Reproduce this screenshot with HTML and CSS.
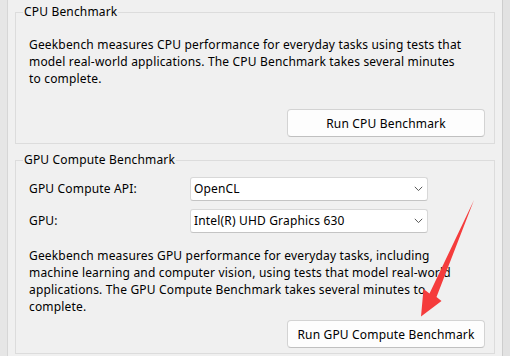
FILE: index.html
```html
<!DOCTYPE html>
<html lang="en">
<head>
<meta charset="utf-8">
<title>Geekbench</title>
<link rel="stylesheet" href="styles.css">
</head>
<body>
<div class="window">
  <div class="edge-left"></div>
  <main class="content">
    <fieldset class="group group-cpu">
      <legend class="group-title">CPU Benchmark</legend>
      <p class="desc">Geekbench measures CPU performance for everyday tasks using tests that<br>model real-world applications. The CPU Benchmark takes several minutes<br>to complete.</p>
      <div class="actions actions-cpu">
        <button class="btn" type="button">Run CPU Benchmark</button>
      </div>
    </fieldset>
    <fieldset class="group group-gpu">
      <legend class="group-title">GPU Compute Benchmark</legend>
      <div class="form">
        <span class="label">GPU Compute API:</span>
        <div class="combo"><span class="combo-text">OpenCL</span><svg class="chev" width="9" height="6" viewBox="0 0 9 6"><path d="M0.8 0.8 L4.5 4.6 L8.2 0.8" fill="none" stroke="#5a5a5a" stroke-width="1"/></svg></div>
        <span class="label">GPU:</span>
        <div class="combo"><span class="combo-text">Intel(R) UHD Graphics 630</span><svg class="chev" width="9" height="6" viewBox="0 0 9 6"><path d="M0.8 0.8 L4.5 4.6 L8.2 0.8" fill="none" stroke="#5a5a5a" stroke-width="1"/></svg></div>
      </div>
      <p class="desc desc-gpu">Geekbench measures GPU performance for everyday tasks, including<br>machine learning and computer vision, using tests that model real-world<br>applications. The GPU Compute Benchmark takes several minutes to<br>complete.</p>
      <div class="actions actions-gpu">
        <button class="btn" type="button">Run GPU Compute Benchmark</button>
      </div>
    </fieldset>
  </main>
  <div class="edge-right"></div>
  <svg class="arrow" width="510" height="356" viewBox="0 0 510 356">
    <polygon points="474,200 436.5,297 441.5,301 421,316.5 423.5,289 429.5,293.5" fill="#f53c3c"/>
  </svg>
</div>
</body>
</html>
```
FILE: styles.css
```css
html, body {
  margin: 0;
  padding: 0;
  background: #f0f0f0;
}

body {
  font-family: "Noto Sans", "Open Sans", sans-serif;
  font-size: 12px;
  letter-spacing: 0.17px;
  color: #000;
}

.window {
  position: relative;
  display: flex;
  width: 510px;
  height: 356px;
  overflow: hidden;
  background: #f0f0f0;
}

.edge-left {
  width: 7px;
  background: #e6e6e6;
  border-right: 1px solid #d6d6d6;
  flex: none;
}

.content {
  flex: 1;
  display: flex;
  flex-direction: column;
  min-width: 0;
}

.edge-right {
  width: 7px;
  background: #e2e2e2;
  border-left: 1px solid #cdcdcd;
  flex: none;
}

.group {
  margin: 0 7px;
  border: 1px solid #dcdcdc;
  min-width: 0;
}

.group-cpu {
  margin-top: 4px;
  padding: 16px 9px 6px 13px;
}

.group-gpu {
  margin-top: 8px;
  padding: 9px 9px 5px 13px;
}

.group-title {
  margin-left: -6px;
  padding: 0 1px;
  line-height: 16px;
}

.desc {
  margin: 0;
  line-height: 17px;
}

.desc-gpu {
  margin-top: 14px;
}

.actions {
  display: flex;
  justify-content: flex-end;
}

.actions-cpu {
  margin-top: 22px;
}

.actions-gpu {
  margin-top: 5px;
}

.btn {
  width: 198px;
  height: 28px;
  box-sizing: border-box;
  background: #fdfdfd;
  border: 1px solid #d3d3d3;
  border-bottom-color: #c0c0c0;
  border-radius: 4px;
  font: inherit;
  letter-spacing: inherit;
  color: #000;
  padding: 0;
}

.form {
  display: grid;
  grid-template-columns: 161px 238px;
  row-gap: 8px;
  align-items: center;
}

.label {
  line-height: 16px;
}

.combo {
  height: 24px;
  box-sizing: border-box;
  background: #fff;
  border: 1px solid #d8d8d8;
  border-bottom-color: #c4c4c4;
  border-radius: 3px;
  display: flex;
  align-items: center;
  justify-content: space-between;
  padding: 0 4px 0 3px;
}

.combo-text {
  line-height: 16px;
}

.chev {
  display: block;
}

.arrow {
  position: absolute;
  left: 0;
  top: 0;
  pointer-events: none;
}
```
